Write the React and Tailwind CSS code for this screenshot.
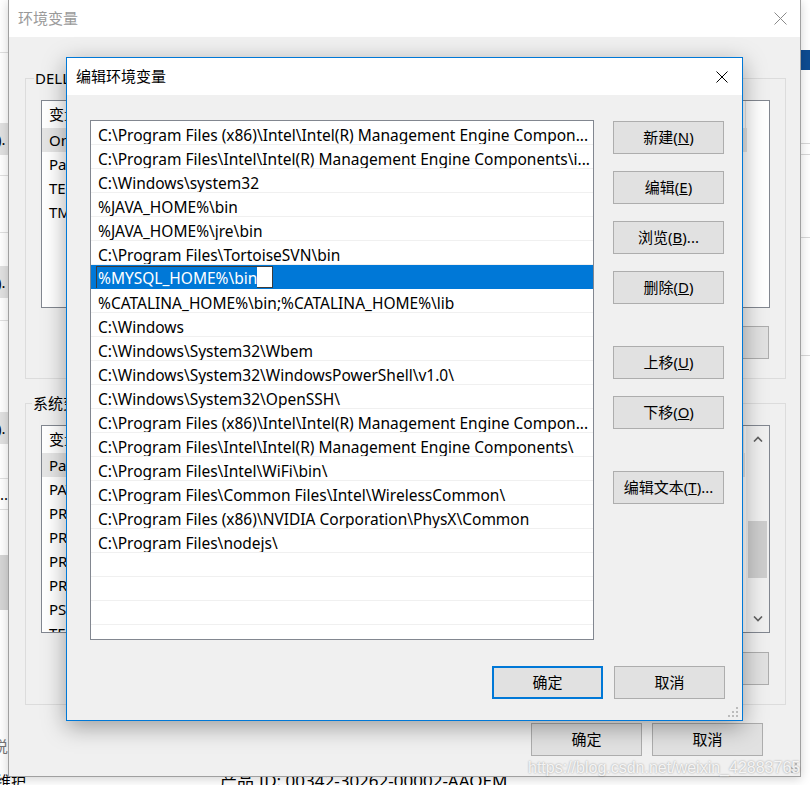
import React from "react";

// Windows 10 style "edit environment variable" dialog over the env vars window

const paths = [
  "C:\\Program Files (x86)\\Intel\\Intel(R) Management Engine Compon...",
  "C:\\Program Files\\Intel\\Intel(R) Management Engine Components\\i...",
  "C:\\Windows\\system32",
  "%JAVA_HOME%\\bin",
  "%JAVA_HOME%\\jre\\bin",
  "C:\\Program Files\\TortoiseSVN\\bin",
  "%MYSQL_HOME%\\bin",
  "%CATALINA_HOME%\\bin;%CATALINA_HOME%\\lib",
  "C:\\Windows",
  "C:\\Windows\\System32\\Wbem",
  "C:\\Windows\\System32\\WindowsPowerShell\\v1.0\\",
  "C:\\Windows\\System32\\OpenSSH\\",
  "C:\\Program Files (x86)\\Intel\\Intel(R) Management Engine Compon...",
  "C:\\Program Files\\Intel\\Intel(R) Management Engine Components\\",
  "C:\\Program Files\\Intel\\WiFi\\bin\\",
  "C:\\Program Files\\Common Files\\Intel\\WirelessCommon\\",
  "C:\\Program Files (x86)\\NVIDIA Corporation\\PhysX\\Common",
  "C:\\Program Files\\nodejs\\",
  "",
  "",
  "",
  "",
];

const userVars = ["OneDrive", "Path", "TEMP", "TMP"];
const sysVars = [
  "Path",
  "PATHEXT",
  "PROCESSOR_ARCHITECTURE",
  "PROCESSOR_IDENTIFIER",
  "PROCESSOR_LEVEL",
  "PROCESSOR_REVISION",
  "PSModulePath",
  "TEMP",
];

function Btn({ children, focused, className = "" }) {
  return (
    <div
      className={`w-[111px] h-[33px] flex items-center justify-center text-[15px] text-black bg-[#e1e1e1] ${
        focused ? "border-2 border-[#0078d7]" : "border border-[#adadad]"
      } ${className}`}
    >
      {children}
    </div>
  );
}

function Grip({ className = "" }) {
  const dots = [
    [8, 0],
    [8, 4],
    [4, 4],
    [8, 8],
    [4, 8],
    [0, 8],
  ];
  return (
    <svg width="11" height="11" viewBox="0 0 11 11" className={className}>
      {dots.map(([x, y], i) => (
        <rect key={i} x={x} y={y} width="2" height="2" fill="#bcbcbc" />
      ))}
    </svg>
  );
}

function CloseX({ color, size = 12 }) {
  return (
    <svg width={size} height={size} viewBox={`0 0 ${size} ${size}`}>
      <path d={`M0.5 0.5L${size - 0.5} ${size - 0.5}M${size - 0.5} 0.5L0.5 ${size - 0.5}`} stroke={color} strokeWidth="1" />
    </svg>
  );
}

function VarList({ names, selected = 0, scroll }) {
  return (
    <div className="h-[208px] border border-[#828790] bg-white flex overflow-hidden">
      <div className="flex-1 min-w-0 flex flex-col">
        <div className="h-[27px] flex shrink-0 items-center text-[15px]">
          <div className="w-[300px] pl-[7px] h-full flex items-center border-r border-[#e5e5e5]">变量</div>
          <div className={`${scroll ? "w-[402px]" : "w-[404px]"} pl-[7px] h-full flex items-center border-r border-[#e5e5e5]`}>值</div>
        </div>
        {names.map((n, i) => (
          <div
            key={i}
            className={`h-[24px] shrink-0 flex items-center text-[15px] whitespace-nowrap ${
              scroll ? "w-[703px]" : "w-[705px]"
            } ${i === selected ? "bg-[#e5e5e5]" : ""}`}
          >
            <span className="pl-[7px]">{n}</span>
          </div>
        ))}
      </div>
      {scroll && (
        <div className="w-[23px] shrink-0 bg-[#f0f0f0] flex flex-col items-center">
          <div className="h-[26px] flex items-center justify-center">
            <svg width="10" height="6" viewBox="0 0 10 6">
              <path d="M1 5.5L5 1.5L9 5.5" stroke="#606060" strokeWidth="1.6" fill="none" />
            </svg>
          </div>
          <div className="mt-[69px] w-[19px] h-[57px] bg-[#cdcdcd]" />
          <div className="flex-1" />
          <div className="h-[26px] flex items-center justify-center">
            <svg width="10" height="6" viewBox="0 0 10 6">
              <path d="M1 0.5L5 4.5L9 0.5" stroke="#606060" strokeWidth="1.6" fill="none" />
            </svg>
          </div>
        </div>
      )}
    </div>
  );
}

function GroupButtons() {
  return (
    <div className="flex justify-end gap-[10px] pr-[1px]">
      <Btn>
        新建(<u>W</u>)...
      </Btn>
      <Btn>
        编辑(<u>I</u>)...
      </Btn>
      <Btn>
        删除(<u>L</u>)
      </Btn>
    </div>
  );
}

export default function App() {
  return (
    <div className="relative w-[810px] h-[785px] overflow-hidden bg-white font-['Noto_Sans','Noto_Sans_CJK_SC',sans-serif] text-black">
      {/* page behind, left strip */}
      <div className="absolute left-0 top-[52px] w-[8px] h-px bg-[#e0e0e0]" />
      <div className="absolute left-0 top-[123px] w-[8px] h-[32px] bg-[#e1e1e1] text-[15px] leading-[32px] overflow-hidden">
        <span className="-ml-[3px]">).</span>
      </div>
      <div className="absolute left-0 top-[175px] w-[8px] h-px bg-[#e0e0e0]" />
      <div className="absolute left-0 top-[232px] w-[8px] h-px bg-[#e0e0e0]" />
      <div className="absolute left-0 top-[266px] w-[8px] h-[32px] bg-[#e1e1e1] text-[15px] leading-[32px] overflow-hidden">
        <span className="-ml-[3px]">).</span>
      </div>
      <div className="absolute left-0 top-[320px] w-[8px] h-px bg-[#e0e0e0]" />
      <div className="absolute left-0 top-[412px] w-[8px] h-[32px] bg-[#e1e1e1] text-[15px] leading-[32px] overflow-hidden">
        <span className="-ml-[3px]">).</span>
      </div>
      <div className="absolute left-0 top-[478px] w-[8px] h-[32px] border-y border-[#e0e0e0] text-[15px] leading-[30px] overflow-hidden">
        <span className="-ml-[4px]">...</span>
      </div>
      <div className="absolute left-0 top-[555px] w-[8px] h-[55px] bg-[#d6d6d6]" />
      <div className="absolute left-0 top-[735px] text-[15px] text-[#777] overflow-hidden w-[8px]">
        <span className="-ml-[7px]">说</span>
      </div>
      <div className="absolute -left-[4px] top-[770px] text-[15px] text-black">维护</div>
      <div className="absolute left-[220px] top-[768px] text-[17px] text-black">产品 ID: 00342-30262-00002-AAOEM</div>

      {/* page behind, right strip */}
      <div className="absolute left-[801px] top-[50px] w-[9px] h-[20px] bg-[#0e4c92]" />
      <div className="absolute left-[801px] top-[143px] w-[9px] h-px bg-[#d8d8d8]" />
      <div className="absolute left-[801px] top-[154px] w-[9px] h-px bg-[#d8d8d8]" />
      <div className="absolute left-[801px] top-[237px] w-[9px] h-px bg-[#d8d8d8]" />
      <div className="absolute left-[801px] top-[355px] w-[9px] h-px bg-[#d8d8d8]" />

      {/* 环境变量 window (inactive) */}
      <div className="absolute left-[8px] top-0 w-[793px] h-[777px] flex flex-col border-x border-b border-[#a0a0a0] bg-[#f0f0f0] shadow-[0_2px_10px_rgba(0,0,0,0.18)]">
        <div className="h-[37px] shrink-0 bg-white flex items-center justify-between pl-[9px] pr-[13px]">
          <span className="text-[15px] text-[#9a9a9a]">环境变量</span>
          <CloseX color="#8a8a8a" size={13} />
        </div>
        <div className="flex-1 flex flex-col pl-[16px] pr-[14px] relative">
          <fieldset className="mt-[31px] border border-[#dcdcdc] px-[15px] pb-[19px]">
            <legend className="-ml-[7px] px-[1px] text-[15px] leading-[20px]">DELL 的用户变量(<u>U</u>)</legend>
            <div className="mt-[12px]">
              <VarList names={userVars} />
            </div>
            <div className="mt-[18px]">
              <GroupButtons />
            </div>
          </fieldset>
          <fieldset className="mt-[14px] border border-[#dcdcdc] px-[15px] pb-[19px]">
            <legend className="-ml-[9px] px-[1px] text-[15px] leading-[20px]">系统变量(<u>S</u>)</legend>
            <div className="mt-[12px]">
              <VarList names={sysVars} scroll />
            </div>
            <div className="mt-[19px]">
              <GroupButtons />
            </div>
          </fieldset>
          <div className="mt-[18px] flex justify-end gap-[10px] pr-[23px]">
            <Btn>确定</Btn>
            <Btn>取消</Btn>
          </div>
          <Grip className="absolute right-[2px] bottom-[2px]" />
        </div>
      </div>

      {/* watermark */}
      <div className="absolute left-[528px] top-[756px] text-[16px] font-['Liberation_Sans',sans-serif] text-white/85 [text-shadow:0_0_2px_rgba(0,0,0,0.4)] whitespace-nowrap">
        https://blog.csdn.net/weixin_42883765
      </div>

      {/* 编辑环境变量 dialog (active) */}
      <div className="absolute left-[66px] top-[57px] w-[677px] h-[664px] flex flex-col border border-[#0078d7] bg-[#f0f0f0] shadow-[0_6px_22px_rgba(0,0,0,0.35)]">
        <div className="h-[37px] shrink-0 bg-white flex items-center justify-between pl-[9px] pr-[14px]">
          <span className="text-[15px] text-black">编辑环境变量</span>
          <CloseX color="#000" size={12} />
        </div>
        <div className="flex-1 flex flex-col pl-[23px] pr-[17px] pt-[25px] relative">
          <div className="flex">
            <div className="w-[504px] h-[520px] border border-[#828790] bg-white overflow-hidden">
              {paths.map((p, i) =>
                i === 6 ? (
                  <div key={i} className="h-[24px] flex items-center border-b border-[#0078d7] bg-[#0078d7] text-[15.5px] whitespace-nowrap overflow-hidden">
                    <div className="ml-[5px] w-[177px] h-[22px] border border-[#3c3c3c] bg-white">
                      <span className="inline-block bg-[#0078d7] text-white leading-[20px] pl-[1px] pt-px">{p}</span>
                    </div>
                  </div>
                ) : (
                  <div key={i} className="h-[24px] border-b border-[#f0f0f0] pl-[7px] pt-[4px] leading-[20px] text-[15.5px] whitespace-nowrap overflow-hidden">
                    {p}
                  </div>
                )
              )}
            </div>
            <div className="ml-[19px] mt-[1px] flex flex-col gap-[17px]">
              <Btn>
                新建(<u>N</u>)
              </Btn>
              <Btn>
                编辑(<u>E</u>)
              </Btn>
              <Btn>
                浏览(<u>B</u>)...
              </Btn>
              <Btn>
                删除(<u>D</u>)
              </Btn>
              <Btn className="mt-[25px]">
                上移(<u>U</u>)
              </Btn>
              <Btn>
                下移(<u>O</u>)
              </Btn>
              <Btn className="mt-[25px]">
                编辑文本(<u>T</u>)...
              </Btn>
            </div>
          </div>
          <div className="mt-[26px] flex justify-end gap-[11px]">
            <Btn focused>确定</Btn>
            <Btn>取消</Btn>
          </div>
          <Grip className="absolute right-[3px] bottom-[2px]" />
        </div>
      </div>
    </div>
  );
}
